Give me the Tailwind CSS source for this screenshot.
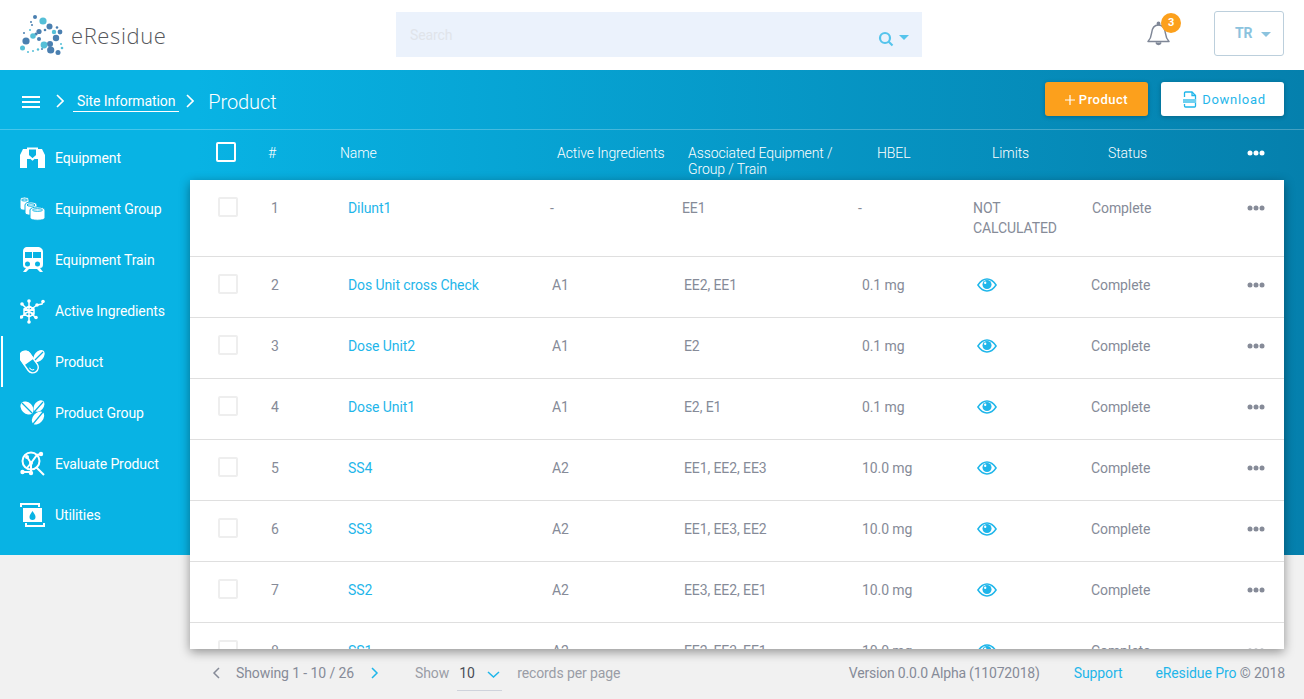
<!DOCTYPE html>
<html lang="en">
<head>
  <meta charset="UTF-8" />
  <title>eResidue - Product</title>
  <script src="https://cdn.jsdelivr.net/npm/@tailwindcss/browser@4"></script>
</head>
<body class="bg-[#f1f1f1] font-['Roboto',sans-serif] text-[14px] tracking-[-0.1px] text-[#868b98] overflow-hidden">
<div class="w-[1304px] h-[699px] overflow-hidden flex flex-col">

  <!-- top bar -->
  <header class="h-[70px] shrink-0 bg-white flex items-center relative">
    <div class="w-[396px] shrink-0 flex items-center pl-[19px]">
      <svg width="46" height="42" viewBox="19 13 46 42" class="shrink-0">
        <g fill="#4a7fb0">
          <circle cx="49.5" cy="25.5" r="3"/><circle cx="39" cy="30.5" r="2.6"/><circle cx="60" cy="31" r="2.4"/><circle cx="56" cy="37" r="3.2"/><circle cx="26" cy="40" r="3.6"/><circle cx="39" cy="38" r="2"/><circle cx="50" cy="43" r="3"/><circle cx="50.7" cy="49" r="3.6"/><circle cx="58" cy="51.5" r="2.5"/><circle cx="35" cy="16" r="2"/><circle cx="36" cy="33" r="1.6"/><circle cx="31" cy="21" r="1"/><circle cx="32" cy="24" r="1"/><circle cx="57" cy="26.500" r="1.300"/><circle cx="45" cy="29" r="1.300"/><circle cx="24" cy="32" r="1"/><circle cx="42" cy="48" r="1"/>
        </g>
        <g fill="#55bfd7">
          <circle cx="43" cy="20" r="3.600"/><circle cx="33" cy="35" r="2.800"/><circle cx="54" cy="31" r="2.200"/><circle cx="44" cy="44" r="3.400"/><circle cx="22.500" cy="47" r="2.500"/><circle cx="62" cy="47" r="1.300"/><circle cx="38" cy="48.500" r="1.200"/><circle cx="28" cy="51" r="1"/><circle cx="33" cy="50" r="1"/><circle cx="61" cy="43" r="1"/><circle cx="30" cy="29" r="1"/>
        </g>
      </svg>
      <span class="ml-[6px] font-['Open_Sans',sans-serif] font-light text-[22px] leading-none tracking-[0.6px] text-[#56585c]">eResidue</span>
    </div>
    <div class="w-[526px] h-[45px] mt-[-1px] bg-[#ebf2fc] flex items-center pl-[14px] pr-[13px]">
      <span class="text-[#e0e4ea] flex-1 mt-[2px]">Search</span>
      <svg width="16" height="16" viewBox="0 0 16 16" class="mt-[9px]" fill="none" stroke="#55c4ec" stroke-width="2.200"><circle cx="7" cy="7" r="5"/><path d="M10.500 10.500 14.500 14.500"/></svg>
      <span class="ml-[5px] mt-[5px] w-0 h-0 border-x-[5px] border-x-transparent border-t-[5px] border-t-[#55c4ec]"></span>
    </div>
    <div class="ml-[224px] relative w-[26px] h-[26px] mt-[-4px]">
      <svg width="26" height="27" viewBox="0 0 26 27" fill="none" stroke="#7f8797" stroke-width="1.500"><path d="M2 21.500c2-2 3-3.500 3.500-8C6 8 8.500 5 12.500 5s6.500 3 7 8.500c.5 4.500 1.500 6 3.500 8z" stroke-linejoin="round"/><circle cx="12.500" cy="3.500" r="1.200" fill="#7f8797"/><path d="M10 22.500a2.600 2.600 0 0 0 5 0" fill="#7f8797"/></svg>
      <span class="absolute left-[15px] top-[-7px] w-[20px] h-[20px] rounded-full bg-[#fca01c] text-white text-[11px] font-bold flex items-center justify-center">3</span>
    </div>
    <div class="ml-[42px] w-[70px] h-[45px] border border-[#bccfdc] rounded-[3px] flex items-center pl-[20px] mt-[-3px]">
      <span class="font-bold text-[#8cc3de] leading-none -mt-[1px]">TR</span>
      <span class="ml-[9px] mt-[2px] w-0 h-0 border-x-[5px] border-x-transparent border-t-[5px] border-t-[#8cc3de]"></span>
    </div>
  </header>

  <!-- blue band, the table card runs out of the bottom of it -->
  <section class="h-[485px] shrink-0 bg-gradient-to-r from-[#08b3e4] from-15% to-[#0580ad]">
    <div class="h-[60px] border-b border-white/25 flex items-center pl-[22px] pr-[20px]">
      <svg width="18" height="12" viewBox="0 0 18 12" class="mt-[4px]" fill="#fff"><rect width="18" height="2"/><rect y="5" width="18" height="2"/><rect y="10" width="18" height="2"/></svg>
      <svg width="8" height="14" viewBox="0 0 8 14" class="ml-[16px] mt-[3px]" fill="none" stroke="#fff" stroke-width="1.600"><path d="M1 1l6 6-6 6"/></svg>
      <span class="ml-[9px] px-[4px] mt-[5px] h-[19px] leading-[17px] border-b border-white text-white">Site Information</span>
      <svg width="8" height="14" viewBox="0 0 8 14" class="ml-[7px] mt-[3px]" fill="none" stroke="#fff" stroke-width="1.600"><path d="M1 1l6 6-6 6"/></svg>
      <span class="ml-[14px] mt-[5px] text-[20px] font-light text-white">Product</span>
      <div class="ml-auto mt-[-1px] flex gap-[13px]">
        <button class="w-[103px] h-[34px] pt-[1px] bg-[#fca01c] rounded-[3px] shadow-[0_1px_4px_rgba(0,0,0,0.25)] text-white text-[13px] font-medium tracking-[0.5px] flex items-center justify-center">
          <svg width="10" height="10" viewBox="0 0 10 10" class="mr-[4px]" stroke="#fff" stroke-width="1.200"><path d="M5 0v10M0 5h10"/></svg>Product
        </button>
        <button class="w-[123px] h-[34px] pt-[1px] pl-[4px] bg-white rounded-[3px] shadow-[0_1px_4px_rgba(0,0,0,0.25)] text-[#1fb6ea] text-[13px] tracking-[0.7px] flex items-center justify-center">
          <svg width="14" height="17" viewBox="0 0 14 17" class="mr-[5px]" fill="none" stroke="#1fb6ea" stroke-width="1.300"><path d="M1.500 6V2a1 1 0 0 1 1-1H9l3.500 3.500V15a1 1 0 0 1-1 1h-9a1 1 0 0 1-1-1v-2"/><path d="M9 1v3.500h3.500"/><rect x="0" y="8" width="13" height="4" fill="#6fd0f0" stroke="none"/></svg>Download
        </button>
      </div>
    </div>

    <div class="flex">
      <!-- side menu -->
      <nav id="menu" class="w-[190px] shrink-0 pt-[2px] text-white"></nav>

      <!-- table -->
      <div class="flex-1 pr-[20px]">
        <div class="h-[50px] pl-[26px] pt-[15px] grid grid-cols-[52px_72px_217px_131px_189px_115px_116px_139px_1fr] font-light text-white leading-[16px]">
          <span class="w-[20px] h-[20px] -mt-[3px] border-2 border-white rounded-[2px]"></span>
          <span>#</span>
          <span>Name</span>
          <span class="whitespace-nowrap">Active Ingredients</span>
          <span>Associated Equipment /<br>Group / Train</span>
          <span>HBEL</span>
          <span>Limits</span>
          <span>Status</span>
          <svg width="18" height="6" viewBox="0 0 18 6" class="mt-[5px]" fill="#fff"><circle cx="3" cy="3" r="2.500"/><circle cx="9" cy="3" r="2.500"/><circle cx="15" cy="3" r="2.500"/></svg>
        </div>
        <div id="rows" class="relative h-[469px] overflow-hidden bg-white shadow-[0_3px_10px_rgba(0,0,0,0.4)]"></div>
      </div>
    </div>
  </section>

  <!-- footer -->
  <footer class="mt-[94px] h-[50px] flex items-center pl-[212px] pr-[19px] pb-[2px] text-[#868b98]">
    <svg width="8" height="12" viewBox="0 0 8 12" fill="none" stroke="#868b98" stroke-width="1.500"><path d="M7 1 2 6l5 5"/></svg>
    <span class="ml-[16px]">Showing 1 - 10 / 26</span>
    <svg width="8" height="12" viewBox="0 0 8 12" class="ml-[17px]" fill="none" stroke="#1fb6ea" stroke-width="1.500"><path d="M1 1l5 5-5 5"/></svg>
    <span class="ml-[36px] text-[#9a9da6]">Show</span>
    <div class="ml-[8px] w-[45px] h-[34px] border-b border-[#cfd3dc] flex items-center pl-[2px] mt-[2px]">
      <span class="text-[#4a4d57]">10</span>
      <svg width="13" height="7" viewBox="0 0 13 7" class="ml-[12px] mt-[2px]" fill="none" stroke="#1fb6ea" stroke-width="1.500"><path d="M1 1l5.500 5L12 1"/></svg>
    </div>
    <span class="ml-[15px] text-[#9a9da6]">records per page</span>
    <span class="ml-auto tracking-[-0.2px]">Version 0.0.0 Alpha (11072018)</span>
    <span class="ml-[34px] text-[#1fb6ea]">Support</span>
    <span class="ml-[33px]"><span class="text-[#1fb6ea]">eResidue Pro</span> © 2018</span>
  </footer>
</div>

<script>
  const icons = {
    equipment: '<path d="M0 10 3 4h5v4l2 5v1H7v9H0zM25 10l-3-6h-5v4l-2 5v1h3v9h7z"/><path d="M8 3.500h9v7l-4.500 4-4.500-4z" fill="#08b2e2" stroke="#fff" stroke-width="2"/>',
    group: '<g stroke="#08b2e2" stroke-width="1"><path d="M0 4c0-4 9-4 9 0v8c0 3-9 3-9 0z"/><path d="M5 9c0-4 12-4 12 0v8c0 3-12 3-12 0z"/><path d="M10 14c0-4 15-4 15 0v8c0 3-15 3-15 0z"/></g><g fill="none" stroke="#08b2e2" stroke-width="1"><ellipse cx="4.500" cy="4" rx="3" ry="1"/><ellipse cx="11" cy="9" rx="4" ry="1.200"/><ellipse cx="17.500" cy="14" rx="5" ry="1.300"/></g>',
    train: '<path fill-rule="evenodd" d="M8 0h9c4 0 6 2 6 5v12c0 3-1 4-3 4l3 4h-3l-3-3H9l-3 3H3l3-4c-2 0-3-1-3-4V5c0-3 1-5 5-5zM5 5v6h7V5zm8 0v6h8V5zM7.500 14.500a2.500 2.500 0 1 0 0 5 2.500 2.500 0 0 0 0-5zm10 0a2.500 2.500 0 1 0 0 5 2.500 2.500 0 0 0 0-5z"/>',
    ingredients: '<g fill="none" stroke="#fff" stroke-width="1.500"><path d="M9 8l5 3v5l-5 3-5-3v-5zM9 3v21M2 6l14 14M1 19 17 7M17 7l5-1 1-3M4 11l10 5M14 11 4 16"/></g><circle cx="9" cy="3" r="1.800"/><circle cx="2" cy="6" r="1.800"/><circle cx="1.500" cy="19" r="1.800"/><circle cx="9" cy="24" r="1.800"/><circle cx="16" cy="19.500" r="1.800"/><circle cx="17" cy="7" r="1.800"/><circle cx="23" cy="3.500" r="1.800"/>',
    product: '<g transform="rotate(-35 9 13)"><rect x="3.500" y="1" width="11" height="24" rx="5.500" fill="none" stroke="#fff" stroke-width="1.400"/><path d="M3 13V6.500a6 6 0 0 1 12 0V13z"/><path d="M6 18c0 2 1 4 3 4" fill="none" stroke="#fff"/></g><ellipse cx="19" cy="7" rx="7" ry="4.500" transform="rotate(-50 19 7)"/><path d="M15 11l8-8" stroke="#08b2e2" stroke-width="1.200"/>',
    productGroup: '<ellipse cx="7" cy="8" rx="7.500" ry="5.500" transform="rotate(45 7 8)"/><path d="M2 3l10 10" stroke="#08b2e2" stroke-width="1.200"/><ellipse cx="19" cy="6" rx="6.500" ry="4.500" transform="rotate(-50 19 6)"/><path d="M15 11l8-9" stroke="#08b2e2" stroke-width="1.200"/><ellipse cx="18" cy="18" rx="7.500" ry="5" transform="rotate(-50 18 18)"/><path d="M13 24l10-12" stroke="#08b2e2" stroke-width="1.200"/>',
    evaluate: '<g fill="none" stroke="#fff" stroke-width="2"><circle cx="11" cy="10" r="8.500"/><path d="M16 16l8 8M7 6l4 6 6-8 4-1M11 12l-4 5M11 12v9M3 21h8"/></g><circle cx="21" cy="3" r="2.200"/><circle cx="2.500" cy="21" r="2.200"/><circle cx="11" cy="22" r="2.200"/><circle cx="7" cy="6" r="2"/><circle cx="11" cy="12" r="2"/>',
    utilities: '<path d="M0 1h20v4h-2V3H2v2H0zM5 21h2v2h16v-2h2v4H5z"/><path fill-rule="evenodd" d="M3 6h19v14H3zm9.500 3c-2 3-3 4-3 6a3 3 0 0 0 6 0c0-2-1-3-3-6z"/>'
  };
  const menuItems = [
    ['Equipment', icons.equipment], ['Equipment Group', icons.group], ['Equipment Train', icons.train],
    ['Active Ingredients', icons.ingredients], ['Product', icons.product], ['Product Group', icons.productGroup],
    ['Evaluate Product', icons.evaluate], ['Utilities', icons.utilities]
  ];
  document.getElementById('menu').innerHTML = menuItems.map(([label, icon]) => `
    <a class="relative h-[51px] flex items-center pl-[20px]">
      ${label === 'Product' ? '<span class="absolute left-[1px] top-0 w-[2px] h-[51px] bg-white"></span>' : ''}
      <svg width="26" height="26" viewBox="0 0 26 26" fill="#fff" class="shrink-0">${icon}</svg>
      <span class="ml-[9px] mt-[2px]">${label}</span>
    </a>`).join('');

  const eye = '<svg width="20" height="14" viewBox="0 0 22 15" class="mt-[3px]"><path d="M1 7.500C4 3 7 1 11 1s7 2 10 6.500C18 12 15 14 11 14S4 12 1 7.500z" fill="none" stroke="#1fb6ea" stroke-width="1.600"/><circle cx="11" cy="7" r="5" fill="#1fb6ea"/><circle cx="9" cy="5" r="1.300" fill="#fff"/></svg>';
  const dots = '<svg width="18" height="6" viewBox="0 0 18 6" class="mt-[7px]" fill="#868b98"><circle cx="3" cy="3" r="2.500"/><circle cx="9" cy="3" r="2.500"/><circle cx="15" cy="3" r="2.500"/></svg>';
  const rows = [
    ['2', 'Dos Unit cross Check', 'A1', 'EE2, EE1', '0.1 mg'],
    ['3', 'Dose Unit2', 'A1', 'E2', '0.1 mg'],
    ['4', 'Dose Unit1', 'A1', 'E2, E1', '0.1 mg'],
    ['5', 'SS4', 'A2', 'EE1, EE2, EE3', '10.0 mg'],
    ['6', 'SS3', 'A2', 'EE1, EE3, EE2', '10.0 mg'],
    ['7', 'SS2', 'A2', 'EE3, EE2, EE1', '10.0 mg'],
    ['8', 'SS1', 'A2', 'EE2, EE3, EE1', '10.0 mg']
  ];
  const box = '<span class="w-[20px] h-[20px] -mt-[1px] border-2 border-[#eeeeee] rounded-[2px]"></span>';
  let html = `
    <div class="h-[77px] border-b border-[#dfdfdf] pl-[28px] pt-[18px] grid grid-cols-[53px_77px_202px_132px_176px_115px_119px_155px_1fr] leading-[20px]">
      ${box}<span>1</span><span class="text-[#1fb6ea]">Dilunt1</span><span>-</span><span>EE1</span><span>-</span>
      <span>NOT<br>CALCULATED</span><span>Complete</span>${dots}
    </div>`;
  rows.forEach(r => {
    html += `
    <div class="h-[61px] border-b border-[#dfdfdf] pl-[28px] pt-[18px] grid grid-cols-[53px_77px_204px_132px_178px_115px_114px_156px_1fr] leading-[20px]">
      ${box}<span>${r[0]}</span><span class="text-[#1fb6ea]">${r[1]}</span><span>${r[2]}</span><span>${r[3]}</span><span>${r[4]}</span>
      ${eye}<span>Complete</span>${dots}
    </div>`;
  });
  document.getElementById('rows').innerHTML = html;
</script>
</body>
</html>
